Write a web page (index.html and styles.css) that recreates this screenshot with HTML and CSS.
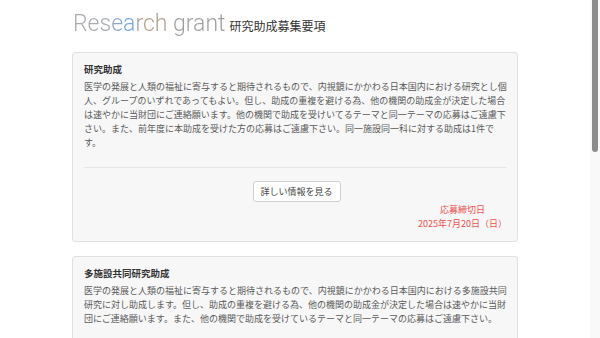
FILE: index.html
```html
<!DOCTYPE html>
<html lang="ja">
<head>
<meta charset="utf-8">
<title>Research grant</title>
<link rel="stylesheet" href="styles.css">
</head>
<body>
<div class="page">
  <header class="head">
    <h1 class="title">Research grant</h1>
    <span class="subtitle">研究助成募集要項</span>
  </header>

  <section class="card">
    <h2 class="card-title">研究助成</h2>
    <p class="card-text">医学の発展と人類の福祉に寄与すると期待されるもので、内視鏡にかかわる日本国内における研究とし個人、グループのいずれであってもよい。但し、助成の重複を避ける為、他の機関の助成金が決定した場合は速やかに当財団にご連絡願います。他の機関で助成を受けいてるテーマと同一テーマの応募はご遠慮下さい。また、前年度に本助成を受けた方の応募はご遠慮下さい。同一施設同一科に対する助成は1件です。</p>
    <hr class="divider">
    <div class="actions"><button class="btn" type="button">詳しい情報を見る</button></div>
    <div class="deadline-row">
      <div class="deadline">
        <div>応募締切日</div>
        <div>2025年7月20日（日）</div>
      </div>
    </div>
  </section>

  <section class="card">
    <h2 class="card-title">多施設共同研究助成</h2>
    <p class="card-text">医学の発展と人類の福祉に寄与すると期待されるもので、内視鏡にかかわる日本国内における多施設共同研究に対し助成します。但し、助成の重複を避ける為、他の機関の助成金が決定した場合は速やかに当財団にご連絡願います。また、他の機関で助成を受けているテーマと同一テーマの応募はご遠慮下さい。</p>
    <hr class="divider">
    <div class="actions"><button class="btn" type="button">詳しい情報を見る</button></div>
  </section>
</div>
<div class="scrollbar"><div class="scroll-thumb"></div></div>
</body>
</html>
```

FILE: styles.css
```css
html, body {
  margin: 0;
  padding: 0;
  background: #ffffff;
  overflow: hidden;
  height: 338px;
}
body {
  font-family: "Noto Sans CJK JP", "Noto Sans", sans-serif;
  color: #555;
}
.page {
  width: 446px;
  margin-left: 72px;
}
.head {
  display: flex;
  align-items: baseline;
  padding-top: 10px;
  height: 38px;
  box-sizing: border-box;
  margin-bottom: 14px;
}
.title {
  margin: 0;
  font-family: Roboto, "Liberation Sans", sans-serif;
  font-weight: 300;
  font-size: 23px;
  line-height: 28px;
  margin-left: 1px;
  background: linear-gradient(90deg, #ababab 0%, #a2a8b2 24%, #6f9fe6 36%, #7aa3de 39%, #b59f84 46%, #ab9e8e 62%, #a0a0a0 72%, #9b9b9b 100%);
  -webkit-background-clip: text;
  background-clip: text;
  color: transparent;
}
.subtitle {
  font-size: 12px;
  color: #333;
  margin-left: 4px;
}
.card {
  box-sizing: border-box;
  width: 446px;
  background: #f7f7f7;
  border: 1px solid #e1e1e1;
  border-radius: 3px;
  padding: 9px 10px 10px 11px;
  margin-bottom: 14px;
}
.card-title {
  margin: 0 0 4px;
  font-size: 9.5px;
  line-height: 14px;
  font-weight: 700;
  color: #333;
}
.card-text {
  margin: 0;
  font-size: 9px;
  line-height: 14px;
  color: #5a5a5a;
}
.divider {
  border: 0;
  border-top: 1px solid #e6e6e6;
  margin: 17px 0 13px;
}
.actions {
  display: flex;
  justify-content: center;
}
.btn {
  font-family: "Noto Sans CJK JP", sans-serif;
  font-size: 9px;
  color: #444;
  background: #fff;
  border: 1px solid #cfcfcf;
  border-radius: 3px;
  height: 21px;
  width: 88px;
  padding: 0;
  margin-left: 2px;
}
.deadline-row {
  display: flex;
  justify-content: flex-end;
}
.deadline {
  text-align: center;
  font-size: 9px;
  line-height: 14px;
  color: #f05050;
  margin-top: 1px;
}
.scrollbar {
  position: fixed;
  top: 0;
  right: 0;
  width: 10px;
  height: 338px;
  background: #f9f9f9;
}
.scroll-thumb {
  margin: 0 2px 0 2px;
  height: 152px;
  background: #8c8c8c;
  border-radius: 0 0 3px 3px;
}
```
